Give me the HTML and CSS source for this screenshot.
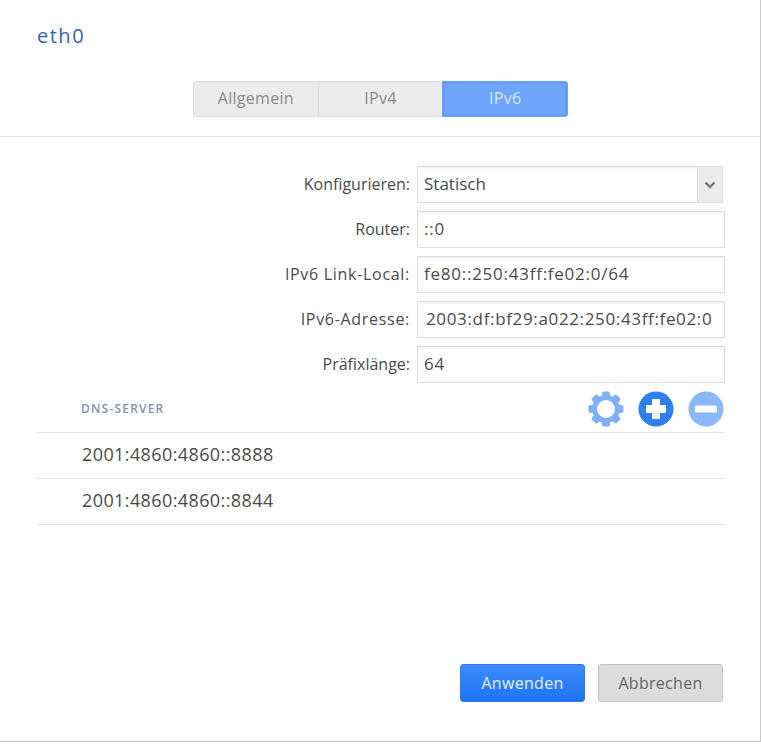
FILE: index.html
```html
<!DOCTYPE html>
<html lang="de">
<head>
  <meta charset="UTF-8" />
  <meta name="viewport" content="width=device-width, initial-scale=1.0"/>
  <title>eth0</title>
  <link rel="stylesheet" href="styles.css">
</head>
<body>

  <div class="dialog">
    <h1 class="title">eth0</h1>

    <div class="tabs-bar">
      <div class="tabs">
        <div class="tab">Allgemein</div>
        <div class="tab">IPv4</div>
        <div class="tab active">IPv6</div>
      </div>
    </div>

    <form class="form">
      <div class="row">
        <label class="label">Konfigurieren:</label>
        <div class="select">
          <span class="select-value">Statisch</span>
          <span class="select-arrow">
            <svg width="12" height="8" viewBox="0 0 12 8"><path d="M1.500 1.500 6 6l4.500-4.500" fill="none" stroke="#777" stroke-width="2.400"/></svg>
          </span>
        </div>
      </div>
      <div class="row">
        <label class="label">Router:</label>
        <div class="input">::0</div>
      </div>
      <div class="row">
        <label class="label wide">IPv6 Link-Local:</label>
        <div class="input">fe80::250:43ff:fe02:0/64</div>
      </div>
      <div class="row">
        <label class="label wide">IPv6-Adresse:</label>
        <div class="input addr">2003:df:bf29:a022:250:43ff:fe02:0</div>
      </div>
      <div class="row">
        <label class="label">Präfixlänge:</label>
        <div class="input">64</div>
      </div>
    </form>

    <div class="dns">
      <div class="dns-head">
        <span class="dns-title">DNS-SERVER</span>
        <div class="dns-tools">
          <svg class="tool" width="36" height="36" viewBox="0 0 36 36">
            <g fill="#7fb0f7">
              <rect x="14" y="0.500" width="8" height="35" rx="2"/>
              <rect x="14" y="0.500" width="8" height="35" rx="2" transform="rotate(45 18 18)"/>
              <rect x="14" y="0.500" width="8" height="35" rx="2" transform="rotate(90 18 18)"/>
              <rect x="14" y="0.500" width="8" height="35" rx="2" transform="rotate(135 18 18)"/>
              <circle cx="18" cy="18" r="14"/>
            </g>
            <circle cx="18" cy="18" r="9" fill="#fff"/>
          </svg>
          <svg class="tool" width="36" height="36" viewBox="0 0 36 36">
            <circle cx="18" cy="18" r="17.500" fill="#2f80ed"/>
            <path d="M15 8h6a1 1 0 0 1 1 1v5h5a1 1 0 0 1 1 1v6a1 1 0 0 1-1 1h-5v5a1 1 0 0 1-1 1h-6a1 1 0 0 1-1-1v-5H9a1 1 0 0 1-1-1v-6a1 1 0 0 1 1-1h5V9a1 1 0 0 1 1-1z" fill="#fff"/>
          </svg>
          <svg class="tool" width="36" height="36" viewBox="0 0 36 36">
            <circle cx="18" cy="18" r="17.500" fill="#8ab8f8"/>
            <rect x="7" y="14.500" width="22" height="7" rx="1.500" fill="#fff"/>
          </svg>
        </div>
      </div>
      <div class="dns-item">2001:4860:4860::8888</div>
      <div class="dns-item">2001:4860:4860::8844</div>
    </div>

    <div class="actions">
      <button type="button" class="btn primary">Anwenden</button>
      <button type="button" class="btn">Abbrechen</button>
    </div>
  </div>

</body>
</html>
```
FILE: styles.css
```css
html, body {
  background-color: #fff;
}

body {
  margin: 0;
  font-family: "Open Sans", "Noto Sans", Arial, sans-serif;
  color: #444;
}

.dialog {
  box-sizing: border-box;
  width: 761px;
  height: 742px;
  border-right: 1px solid #c9c9c9;
  border-bottom: 1px solid #c9c9c9;
  display: flex;
  flex-direction: column;
}

.title {
  margin: 0;
  padding: 23px 0 0 37px;
  height: 81px;
  box-sizing: border-box;
  font-size: 20px;
  line-height: 26px;
  font-weight: 400;
  letter-spacing: 1.500px;
  color: #2f63b0;
}

.tabs-bar {
  height: 55px;
  border-bottom: 1px solid #e4e4e4;
  padding-left: 193px;
}

.tabs {
  display: flex;
  width: 375px;
  height: 36px;
}

.tab {
  flex: 1;
  box-sizing: border-box;
  background-color: #ececec;
  border: 1px solid #dcdcdc;
  border-right: 0;
  color: #8a8a8a;
  font-size: 16px;
  letter-spacing: 0.300px;
  line-height: 32px;
  text-align: center;
}

.tab:first-child {
  border-radius: 3px 0 0 3px;
}

.tab.active {
  background-color: #6ea4fb;
  border: 1px solid #6ea4fb;
  border-radius: 0 3px 3px 0;
  box-shadow: inset 0 0 3px #5488e0;
  color: #d8e8ff;
}

.form {
  padding-top: 29px;
}

.row {
  display: flex;
  align-items: center;
  height: 37px;
  margin-bottom: 8px;
}

.label {
  width: 410px;
  margin-right: 7px;
  padding-bottom: 2px;
  text-align: right;
  font-size: 16px;
  color: #4a4a4a;
}

.label.wide {
  letter-spacing: 0.700px;
}

.input, .select {
  box-sizing: border-box;
  width: 308px;
  height: 37px;
  border: 1px solid #dcdcdc;
  box-shadow: inset 0 3px 3px -2px #eee;
  padding-left: 6px;
  font-size: 17px;
  line-height: 33px;
  color: #4a4a4a;
  letter-spacing: 0.750px;
  white-space: nowrap;
}

.input.addr {
  padding-left: 8px;
  letter-spacing: 0.650px;
}

.select {
  width: 306px;
  display: flex;
  padding-right: 0;
  letter-spacing: 0;
}

.select-value {
  flex: 1;
}

.select-arrow {
  width: 24px;
  background-color: #ececec;
  border-left: 1px solid #dcdcdc;
  display: flex;
  align-items: center;
  justify-content: center;
}

.dns {
  margin: -1px 35px 0 37px;
}

.dns-head {
  display: flex;
  align-items: center;
  justify-content: space-between;
  height: 43px;
  box-sizing: border-box;
  border-bottom: 1px solid #e4e4e4;
  padding: 1px 1px 5px 44px;
}

.dns-title {
  padding-bottom: 2px;
  font-size: 12px;
  font-weight: 600;
  letter-spacing: 1.200px;
  color: #8493a5;
}

.dns-tools {
  display: flex;
  gap: 14px;
}

.tool {
  display: block;
}

.dns-item {
  box-sizing: border-box;
  height: 46px;
  border-bottom: 1px solid #e4e4e4;
  padding-left: 45px;
  font-size: 18px;
  letter-spacing: 0.400px;
  line-height: 42px;
  color: #4a4a4a;
}

.actions {
  margin-top: auto;
  display: flex;
  justify-content: flex-end;
  gap: 13px;
  padding: 0 37px 39px 0;
}

.btn {
  box-sizing: border-box;
  width: 125px;
  height: 38px;
  border: 1px solid #c4c4c4;
  border-radius: 3px;
  background-color: #dcdcdc;
  color: #666;
  font-family: inherit;
  font-size: 16px;
  letter-spacing: 0.300px;
}

.btn.primary {
  background: linear-gradient(#3d8bfd, #1f74f4);
  border-color: #2a7cf5;
  color: #e6f1ff;
}
```
